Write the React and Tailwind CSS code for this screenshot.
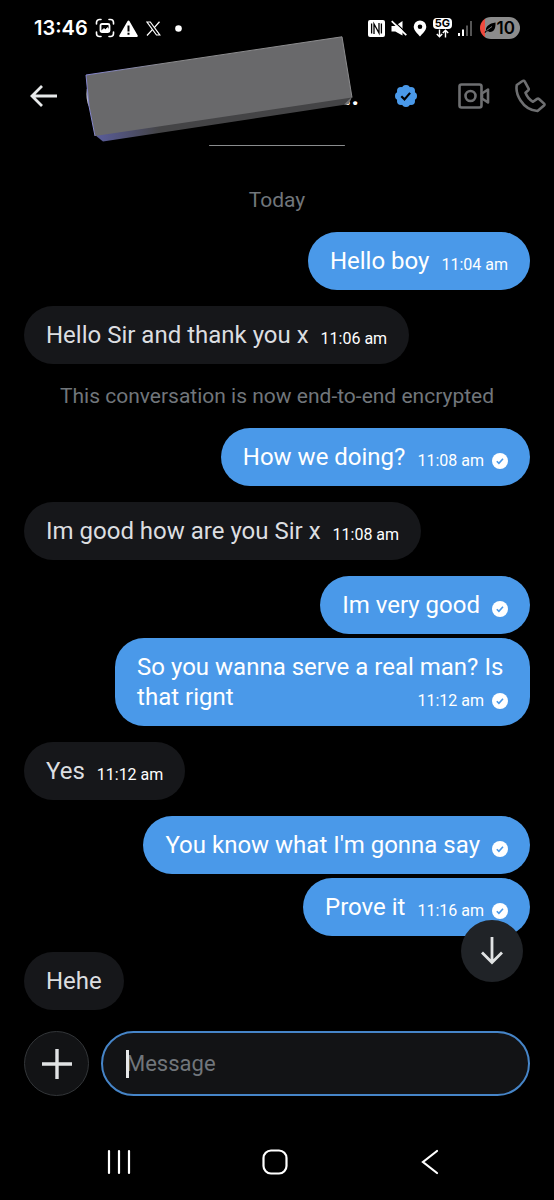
import React from "react";

const items = [
  { kind: "note", text: "Today", first: true },
  { mine: true, text: "Hello boy", time: "11:04 am" },
  { text: "Hello Sir and thank you x", time: "11:06 am" },
  { kind: "note", text: "This conversation is now end-to-end encrypted" },
  { mine: true, text: "How we doing?", time: "11:08 am", sent: true },
  { text: "Im good how are you Sir x", time: "11:08 am" },
  { mine: true, text: "Im very good", sent: true },
  { mine: true, text: "So you wanna serve a real man? Is that rignt", time: "11:12 am", sent: true, joined: true },
  { text: "Yes", time: "11:12 am" },
  { mine: true, text: "You know what I'm gonna say", sent: true },
  { mine: true, text: "Prove it", time: "11:16 am", sent: true, joined: true },
  { text: "Hehe" },
];

function SentIcon() {
  return (
    <svg width="16" height="16" viewBox="0 0 16 16" role="img" aria-label="Sent">
      <circle cx="8" cy="8" r="8" fill="#fff" />
      <path d="M4.800 8.300l2.100 2.100 4.100-4.600" fill="none" stroke="#4a99e9" strokeWidth="1.600" />
    </svg>
  );
}

function Message({ mine, text, time, sent, joined }) {
  const side = mine ? "self-end bg-[#4a99e9] text-white" : "self-start bg-[#16171a] text-[#dcdee0]";
  return (
    <li className={`max-w-[82%] rounded-[29px] px-[22px] py-3.5 text-2xl leading-[30px] ${side} ${joined ? "mt-1" : "mt-4"}`}>
      {text}
      {(time || sent) && (
        <span className="float-right ml-3 flex h-[30px] items-center gap-2 pt-2 text-base leading-[22px] text-white">
          {time}
          {sent && <SentIcon />}
        </span>
      )}
    </li>
  );
}

function Note({ text, first }) {
  return <li className={`self-center text-center text-[21px] leading-8 text-[#71767b] ${first ? "" : "mt-4"}`}>{text}</li>;
}

function StatusBar() {
  return (
    <div className="flex h-14 items-center justify-between px-[34px] text-white">
      <div className="flex items-center gap-2">
        <span className="font-['Inter',sans-serif] text-xl font-semibold">13:46</span>
        <svg className="-ml-px" width="20" height="20" viewBox="0 0 20 20" fill="none" stroke="#fff" strokeWidth="1.600" strokeLinecap="round">
          <path d="M1.500 6V4.500a3 3 0 013-3H6M14 1.500h1.500a3 3 0 013 3V6M18.500 14v1.500a3 3 0 01-3 3H14M6 18.500H4.500a3 3 0 01-3-3V14" />
          <rect x="5.500" y="6" width="9" height="8" rx="1.500" strokeWidth="1.800" />
          <path d="M6 13l3-2.500 1.500 1 2-2L14 11.500V13z" fill="#fff" strokeWidth=".6" />
        </svg>
        <svg className="-ml-1" width="19" height="17" viewBox="0 0 19 17">
          <path d="M9.500.5a1 1 0 01.9.5l8.300 14.400a1 1 0 01-.9 1.500H1.200a1 1 0 01-.9-1.500L8.600 1a1 1 0 01.9-.5z" fill="#fff" />
          <path d="M8.500 5.500h2v6h-2zM8.500 12.800h2v2h-2z" fill="#000" />
        </svg>
        <svg width="15" height="15" viewBox="0 0 15 15" fill="none" stroke="#fff">
          <path d="M1 1h3.300l9.500 13h-3.300z" strokeWidth="1.200" />
          <path d="M13.500.7L8.300 6.600M6.400 8.600L1 14.500" strokeWidth="1.300" />
        </svg>
        <svg className="ml-1.5" width="7" height="7" viewBox="0 0 7 7"><circle cx="3.500" cy="3.500" r="3.300" fill="#fff" /></svg>
      </div>
      <div className="flex items-center gap-1.5">
        <svg width="17" height="17" viewBox="0 0 17 17">
          <rect width="17" height="17" rx="2" fill="#fff" />
          <path d="M3.600 3.500v10M6 14V4l5 9V3M13.400 3.500v10" fill="none" stroke="#000" strokeWidth="1.300" />
        </svg>
        <svg width="16" height="17" viewBox="0 0 16 17">
          <path d="M.5 6h3.800L11.500 1v14.500L4.300 11.500H.5z" fill="#fff" />
          <path d="M2 .5L16 13.500" stroke="#000" strokeWidth="1.200" />
          <path d="M.7 1.200L15.300 15.200" stroke="#fff" strokeWidth="1.700" />
        </svg>
        <svg width="14" height="17" viewBox="0 0 14 17">
          <path fillRule="evenodd" fill="#fff" d="M7 .5a6.300 6.300 0 016.300 6.300c0 3.500-4 7.200-6.300 9.700C4.700 14 .7 10.300.7 6.800A6.300 6.300 0 017 .5zm0 4a2.300 2.300 0 100 4.600 2.300 2.300 0 000-4.600z" />
        </svg>
        <div className="flex flex-col items-center">
          <span className="h-[11px] rounded-sm bg-white px-0.5 font-['Inter',sans-serif] text-[11px] leading-[11px] font-bold text-black">5G</span>
          <svg width="13" height="9" viewBox="0 0 13 9" fill="none" stroke="#fff" strokeWidth="1.400">
            <path d="M3.500.500v7M.8 5l2.700 2.800L6.200 5M9.500 8.500v-7M6.800 4l2.700-2.800L12.200 4" />
          </svg>
        </div>
        <svg width="14" height="15" viewBox="0 0 14 15">
          <path d="M0 12h2v3H0zM4 8.500h2V15H4z" fill="#fff" />
          <path d="M8 4.500h2V15H8zM12 0h2v15h-2z" fill="#555" />
        </svg>
        <div className="ml-0.5 flex h-[22px] w-10 items-center justify-between overflow-hidden rounded-full bg-linear-to-r from-[#f04a3e] from-12% to-[#8c8c8c] to-12% pl-1 pr-[5px]">
          <svg width="12" height="12" viewBox="0 0 12 12">
            <path d="M11.500.5c.3 5.500-1.300 9.500-5.500 9.500-1.500 0-2.500-.4-3-.9L1.200 11 .5 10.300 2 8.500C1.500 4.500 5 1.500 11.500.5z" fill="#000" />
            <path d="M2.500 8.500L8 4.500" stroke="#999" strokeWidth=".8" />
          </svg>
          <span className="font-['Inter',sans-serif] text-[17px] leading-[22px] font-semibold text-black">10</span>
        </div>
      </div>
    </div>
  );
}

function Header() {
  return (
    <header className="relative flex h-20 items-center justify-between pl-[29px] pr-2">
      <button type="button" aria-label="Back">
        <svg width="28" height="24" viewBox="0 0 28 24" fill="none" stroke="#e7e9ea" strokeWidth="2.800">
          <path d="M28 12H3M13 2L3 12l10 10" />
        </svg>
      </button>
      <div className="flex items-center">
        <span className="pr-[35px] text-[26px] leading-8 font-bold text-white">..</span>
        <svg className="mr-10" width="24" height="24" viewBox="0 0 24 24" role="img" aria-label="Verified">
          <g fill="#4a99e9">
            <circle cx="12" cy="12" r="9.500" />
            <circle cx="12" cy="5" r="4" />
            <circle cx="17" cy="7" r="4" />
            <circle cx="19" cy="12" r="4" />
            <circle cx="17" cy="17" r="4" />
            <circle cx="12" cy="19" r="4" />
            <circle cx="7" cy="17" r="4" />
            <circle cx="5" cy="12" r="4" />
            <circle cx="7" cy="7" r="4" />
          </g>
          <path d="M7.300 12.200l3.200 3.200 5.600-6.500" fill="none" stroke="#000" strokeWidth="2.200" />
        </svg>
        <button type="button" aria-label="Video call" className="mr-6">
          <svg width="32" height="26" viewBox="0 0 32 26" fill="none" stroke="#6e6f71" strokeWidth="2.600" strokeLinejoin="round">
            <rect x="1.500" y="1.500" width="22" height="23" rx="2" />
            <circle cx="12.500" cy="13" r="5" />
            <path d="M24 10.500l6-4v13l-6-4z" />
          </svg>
        </button>
        <button type="button" aria-label="Call">
          <svg width="32" height="34" viewBox="0 0 32 34" fill="none" stroke="#6e6f71" strokeWidth="2.600" strokeLinejoin="round">
            <path d="M8.500 2L2.800 6C1.200 14 7.500 30.500 23.500 32l6.500-5.500c.6-.6.6-1.300.1-1.900L25 20c-.6-.5-1.300-.5-1.900-.1L19 22.800c-3.500-2-6-5-7.500-9l2.800-2.600c.5-.5.6-1 .3-1.600L10.800 2.700C10.300 1.700 9.300 1.400 8.500 2z" />
          </svg>
        </button>
      </div>
      <svg className="absolute -top-5 left-[84px]" width="272" height="108" viewBox="0 0 272 108" aria-hidden="true">
        <defs>
          <linearGradient id="edge" x1="0" x2="1" y1="0" y2="0">
            <stop offset="0" stopColor="#5a5d9c" />
            <stop offset=".25" stopColor="#444446" />
            <stop offset="1" stopColor="#444446" />
          </linearGradient>
          <linearGradient id="rim" x1="0" x2="1" y1="0" y2="0">
            <stop offset="0" stopColor="#8385cf" />
            <stop offset=".3" stopColor="#8b8b8d" />
            <stop offset="1" stopColor="#8b8b8d" />
          </linearGradient>
        </defs>
        <path d="M11 99l8 6.500 243-37 6-8z" fill="url(#edge)" />
        <path d="M260 68.500l2 .3 3-1 3-7z" fill="#747476" />
        <path d="M3.500 53c-.8 6-.3 12 2 17" fill="none" stroke="#b9bac4" strokeWidth="1.500" />
        <path d="M2 39L258 .8l10 60.700L11 100 5 70z" fill="#69696b" />
        <path d="M11 100L5 70 2 39 258 .8l10 60.700" fill="none" stroke="url(#rim)" />
      </svg>
    </header>
  );
}

function Composer() {
  return (
    <form className="mt-[21px] flex items-center gap-3 px-6" onSubmit={(e) => e.preventDefault()}>
      <button type="button" aria-label="Add attachment" className="flex size-[65px] shrink-0 items-center justify-center rounded-full border border-[#333639] bg-[#121315]">
        <svg width="30" height="30" viewBox="0 0 30 30" stroke="#e1e3e4" strokeWidth="3.400"><path d="M15 0v30M0 15h30" /></svg>
      </button>
      <label className="relative flex h-[65px] min-w-0 flex-1 items-center rounded-full border-2 border-[#4685c8] bg-[#121315] px-[23px]">
        <span className="absolute h-7 w-[3px] bg-[#e7e9ea]" aria-hidden="true" />
        <input type="text" aria-label="Message" placeholder="Message" className="w-full bg-transparent text-[22px] text-white outline-none placeholder:text-[#71767b]" />
      </label>
    </form>
  );
}

function SystemNav() {
  return (
    <nav className="mt-[53px] flex items-center justify-between pr-[112px] pl-[107px] pb-[23px]">
      <button type="button" aria-label="Recent apps">
        <svg width="24" height="26" viewBox="0 0 24 26" stroke="#fff" strokeWidth="2.200" strokeLinecap="round"><path d="M2 2v22M12 2v22M22 2v22" /></svg>
      </button>
      <button type="button" aria-label="Home">
        <svg width="26" height="26" viewBox="0 0 26 26" fill="none" stroke="#fff" strokeWidth="2.200"><rect x="1.500" y="1.500" width="23" height="23" rx="7.500" /></svg>
      </button>
      <button type="button" aria-label="Back to previous app">
        <svg width="24" height="26" viewBox="0 0 24 26" fill="none" stroke="#fff" strokeWidth="2.200" strokeLinecap="round"><path d="M19 2L5 13l14 11" /></svg>
      </button>
    </nav>
  );
}

export default function App() {
  return (
    <div className="min-h-screen bg-black font-['Roboto',sans-serif]">
      <StatusBar />
      <Header />
      <div className="mx-auto mt-[9px] h-px w-[136px] rounded-full bg-[#8a8c8e]" />
      <main className="relative mt-[38px]">
        <ol className="flex flex-col px-6">
          {items.map((item, i) => (item.kind === "note" ? <Note key={i} {...item} /> : <Message key={i} {...item} />))}
        </ol>
        <button type="button" aria-label="Scroll to latest" className="absolute right-[31px] bottom-7 flex size-[62px] items-center justify-center rounded-full bg-[#202327]">
          <svg width="24" height="28" viewBox="0 0 24 28" fill="none" stroke="#e1e3e4" strokeWidth="2.800"><path d="M12 0v25M2 15.500l10 10 10-10" /></svg>
        </button>
      </main>
      <Composer />
      <SystemNav />
    </div>
  );
}
